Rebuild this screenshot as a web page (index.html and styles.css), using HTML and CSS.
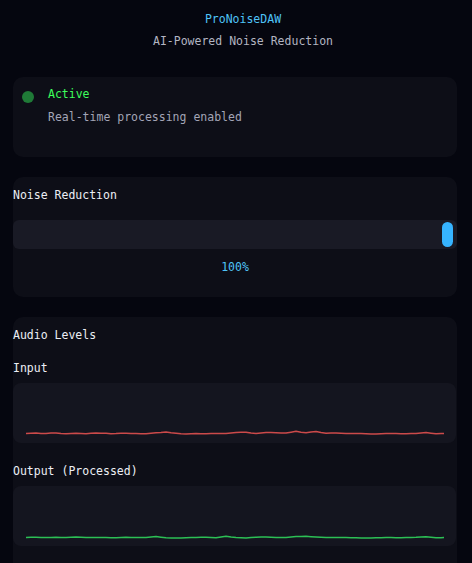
FILE: index.html
```html
<!DOCTYPE html>
<html lang="en">
<head>
<meta charset="utf-8">
<title>ProNoiseDAW</title>
<link rel="stylesheet" href="styles.css">
</head>
<body>
<main class="app">
  <header class="header">
    <div class="brand">ProNoiseDAW</div>
    <div class="tagline">AI-Powered Noise Reduction</div>
  </header>

  <section class="card status-card">
    <div class="status-row">
      <span class="status-dot"></span>
      <div class="status-text">
        <div class="status-label">Active</div>
        <div class="status-desc">Real-time processing enabled</div>
      </div>
    </div>
  </section>

  <section class="card slider-card">
    <div class="section-title">Noise Reduction</div>
    <div class="track">
      <span class="thumb"></span>
    </div>
    <div class="value">100%</div>
  </section>

  <section class="card levels-card">
    <div class="section-title">Audio Levels</div>
    <div class="sub-title">Input</div>
    <div class="scope">
      <svg class="wave" viewBox="0 0 443 60" width="443" height="60">
        <polyline class="wave-in" points="13,50.5 18,50.3 23,50 28,50.4 33,50.5 38,50.1 43,50 48,50.6 53,50.8 58,50.4 63,50.2 68,50.5 73,50.7 78,50.3 83,50 88,50.2 93,50.3 98,50.7 103,50.6 108,50.3 113,50.2 118,50.4 123,50.5 128,50.7 133,50.8 138,50.3 143,49.8 148,49.5 153,49 158,49.8 163,50.3 168,50.8 173,51 178,50.8 183,50.6 188,50.7 193,50.8 198,50.6 203,50.5 208,50.5 213,50.4 218,50 223,49.6 228,49.3 233,49.2 238,50 243,50.6 248,50.1 253,49.5 258,49.6 263,49.8 268,50 273,50 278,49.2 283,48.3 288,49.2 293,49.8 298,49 303,48.5 308,49.6 313,50.3 318,50.1 323,50 328,50.3 333,50.5 338,50.4 343,50.4 348,50.6 353,50.8 358,50.9 363,51 368,50.8 373,50.6 378,50.5 383,50.5 388,50.7 393,50.8 398,50.6 403,50.4 408,50 413,49.5 418,50.2 423,50.8 428,50.6 431,50.5"/>
      </svg>
    </div>
    <div class="sub-title sub-title-next">Output (Processed)</div>
    <div class="scope">
      <svg class="wave" viewBox="0 0 443 60" width="443" height="60">
        <polyline class="wave-out" points="13,51.5 18,51.3 23,51.2 28,51.4 33,51.6 38,51.4 43,51.3 48,51.4 53,51.5 58,51.2 63,51 68,51.3 73,51.6 78,51.5 83,51.4 88,51.4 93,51.5 98,51.7 103,51.8 108,51.5 113,51.2 118,51.4 123,51.5 128,51.6 133,51.6 138,51.1 143,50.6 148,51.2 153,51.8 158,51.9 163,52 168,51.9 173,51.8 178,51.6 183,51.4 188,51.3 193,51.2 198,51.5 203,51.8 208,51 213,50.2 218,51 223,51.6 228,51.8 233,52 238,51.6 243,51.2 248,51.1 253,51 258,51.2 263,51.4 268,51.5 273,51.5 278,51 283,50.5 288,50.4 293,50.3 298,50.7 303,51 308,51.2 313,51.4 318,51.5 323,51.5 328,51.6 333,51.6 338,51.7 343,51.8 348,51.9 353,52 358,51.9 363,51.8 368,51.7 373,51.6 378,51.6 383,51.7 388,51.7 393,51.6 398,51.4 403,51.3 408,51 413,50.8 418,51.3 423,51.8 428,51.7 431,51.6"/>
      </svg>
    </div>
  </section>
</main>
</body>
</html>
```

FILE: styles.css
```css
html, body {
  margin: 0;
  padding: 0;
  background: #05060f;
}

body {
  font-family: "DejaVu Sans Mono", "Liberation Mono", monospace;
  font-size: 11.5px;
  line-height: 16px;
  color: #e6e7ee;
  overflow: hidden;
}

.app {
  padding: 0 15px 0 13px;
}

.header {
  padding-top: 11px;
  padding-left: 16px;
  text-align: center;
}

.brand {
  color: #4fc3f7;
}

.tagline {
  margin-top: 6px;
  color: #b3b5c2;
}

.card {
  background: #0d0e17;
  border-radius: 10px;
}

.status-card {
  margin-top: 28px;
  height: 80px;
  box-sizing: border-box;
  padding: 9px 9px 0 9px;
}

.status-row {
  display: flex;
  align-items: flex-start;
}

.status-dot {
  width: 12px;
  height: 12px;
  border-radius: 50%;
  background: #1f7a37;
  margin-top: 5px;
  margin-right: 14px;
}

.status-label {
  color: #3dff5c;
}

.status-desc {
  margin-top: 7px;
  color: #a3a5b6;
}

.slider-card {
  margin-top: 20px;
  height: 120px;
  box-sizing: border-box;
  padding-top: 10px;
}

.section-title {
  color: #eceef5;
}

.track {
  margin-top: 17px;
  height: 29px;
  background: #191a25;
  border-radius: 6px;
  display: flex;
  justify-content: flex-end;
  align-items: center;
}

.thumb {
  width: 11px;
  height: 25px;
  border-radius: 6px;
  background: #36b4ff;
  margin-right: 4px;
}

.value {
  margin-top: 10px;
  text-align: center;
  color: #4fc3f7;
}

.levels-card {
  margin-top: 20px;
  padding-top: 10px;
  padding-bottom: 40px;
}

.sub-title {
  margin-top: 17px;
  color: #eceef5;
}

.sub-title-next {
  margin-top: 20px;
}

.scope {
  margin-top: 7px;
  height: 60px;
  width: 443px;
  background: #14151f;
  border-radius: 8px;
}

.wave {
  display: block;
}

.wave polyline {
  fill: none;
  stroke-width: 1.5;
  stroke-linejoin: round;
}

.wave-in {
  stroke: #e0504f;
  opacity: 0.9;
}

.wave-out {
  stroke: #2fd35b;
  opacity: 0.9;
}
```
